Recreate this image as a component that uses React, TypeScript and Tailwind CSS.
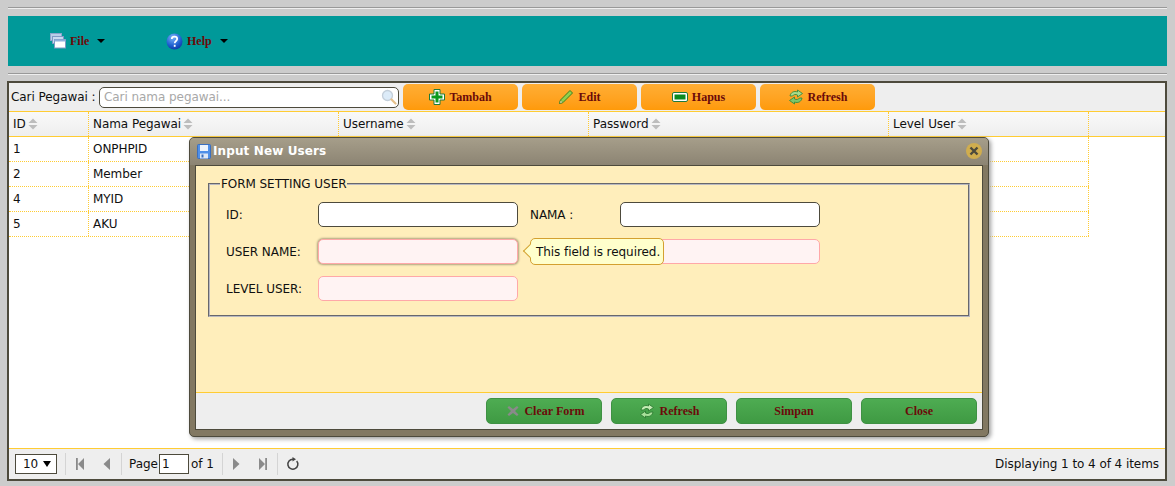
import React from "react";

const sans = "font-['Tahoma','DejaVu_Sans',sans-serif]";
const serif = "font-['Liberation_Serif',serif]";

function Sort() {
  return (
    <svg width="10" height="12" viewBox="0 0 10 12" className="ml-[2px] shrink-0">
      <path d="M5 0.5 9.5 5H0.5Z M0.5 7H9.5L5 11.5Z" fill="#bdbdbd" />
    </svg>
  );
}

function Plus() {
  return (
    <svg width="16" height="16" viewBox="0 0 16 16">
      <path d="M5 .5h6v4.500h4.500v6H11v4.500H5V11H.5V5H5Z" fill="#fff" stroke="#1f7a3a" strokeWidth="1" />
      <path d="M6.500 2.500h3v4h4v3h-4v4h-3v-4h-4v-3h4Z" fill="#0a9a1f" />
    </svg>
  );
}
function Pencil() {
  return (
    <svg width="16" height="16" viewBox="0 0 16 16">
      <path d="M12 1.500 14.500 4 5 13.500l-3.500 1 1-3.500Z" fill="#8fd14f" stroke="#3f7d1c" strokeWidth="1" />
      <path d="M1.500 14.500l1-3.500L5 13.500Z" fill="#f0e0b0" stroke="#3f7d1c" strokeWidth=".6" />
    </svg>
  );
}
function Minus() {
  return (
    <svg width="16" height="16" viewBox="0 0 16 16">
      <rect x="0.5" y="3.500" width="15" height="9" rx="1.500" fill="#fff" stroke="#1f7a3a" />
      <rect x="2.500" y="5.500" width="11" height="5" fill="#0a8a1f" />
    </svg>
  );
}
function Refresh({ pale }: { pale?: boolean }) {
  const a = pale ? "#c4ecb4" : "#a6dc8c";
  const b = pale ? "#a8e09a" : "#7cc76b";
  const s = pale ? "#2f7d33" : "#3d8a3a";
  return (
    <svg width="16" height="16" viewBox="0 0 16 16">
      <path d="M2 7C2.500 3.500 6 1.500 9.500 3V1L14.500 4.500 9.500 8V6C7.500 5 5.500 5.500 4.500 7Z" fill={a} stroke={s} strokeWidth=".9" strokeLinejoin="round" />
      <path d="M14 9C13.500 12.500 10 14.500 6.500 13V15L1.500 11.500 6.500 8V10C8.500 11 10.500 10.500 11.500 9Z" fill={b} stroke={s} strokeWidth=".9" strokeLinejoin="round" />
    </svg>
  );
}
function ClearX() {
  return (
    <svg width="12" height="12" viewBox="0 0 12 12">
      <path d="M2 1 6 4 10 1 11.500 2.500 8 6 11.500 9.500 10 11 6 8 2 11 .5 9.500 4 6 .5 2.500Z" fill="#8a8a8a" />
    </svg>
  );
}
function Floppy() {
  return (
    <svg width="14" height="15" viewBox="0 0 14 15">
      <rect x=".5" y=".5" width="13" height="14" rx="1" fill="#4f8fe8" stroke="#3a6fc0" />
      <rect x="3" y="1" width="8" height="6" fill="#eef4fc" />
      <rect x="3" y="9.500" width="8" height="5" fill="#dfe8f5" />
      <rect x="4.500" y="10.500" width="2" height="3" fill="#3a6fc0" />
    </svg>
  );
}
function Windows() {
  return (
    <svg width="16" height="16" viewBox="0 0 16 16">
      <rect x=".5" y=".5" width="11" height="7" fill="#b9cde8" stroke="#8aa5cc" />
      <rect x="2.500" y="3.500" width="11" height="7" fill="#c9daf0" stroke="#7e9ac4" />
      <rect x="4.500" y="6.500" width="11" height="8.500" fill="#fff" stroke="#7e9ac4" />
      <rect x="4.500" y="6.500" width="11" height="2" fill="#8fb0dc" />
    </svg>
  );
}
function HelpIcon() {
  return (
    <svg width="17" height="17" viewBox="0 0 17 17">
      <defs>
        <radialGradient id="h" cx=".4" cy=".25" r=".85">
          <stop offset="0" stopColor="#7ab4f8" />
          <stop offset=".6" stopColor="#1f5fd0" />
          <stop offset="1" stopColor="#0a2f9a" />
        </radialGradient>
      </defs>
      <circle cx="8.500" cy="8.500" r="8" fill="url(#h)" />
      <path d="M5.800 6C5.800 2.900 11.200 2.900 11.200 6 11.200 8 8.700 8 8.700 10.300" fill="none" stroke="#fff" strokeWidth="1.700" />
      <rect x="7.800" y="11.800" width="1.800" height="2" fill="#fff" />
    </svg>
  );
}
function Search() {
  return (
    <svg width="16" height="16" viewBox="0 0 16 16">
      <circle cx="6.500" cy="6.500" r="5" fill="#dcebf8" stroke="#c4cfda" strokeWidth="1.300" />
      <path d="M10.500 10.500 14.500 14.500" stroke="#e6c08a" strokeWidth="2.200" strokeLinecap="round" />
    </svg>
  );
}
function Caret() {
  return <span className="ml-[8px] inline-block h-0 w-0 border-x-[4px] border-t-[4px] border-x-transparent border-t-black" />;
}

function ToolBtn({ icon, label }: { icon: React.ReactNode; label: string }) {
  return (
    <div className={`flex h-[26px] w-[115px] items-center justify-center gap-[4px] rounded-[5px] bg-gradient-to-b from-[#ffae33] to-[#ff9a08] text-[12px] font-bold tracking-normal text-[#6b0a0a] ${serif}`}>
      {icon}
      <span>{label}</span>
    </div>
  );
}
function GreenBtn({ icon, label, extra }: { icon?: React.ReactNode; label: string; extra?: string }) {
  return (
    <div className={`flex h-[26px] w-[116px] items-center justify-center gap-[5px] rounded-[5px] border border-[#3f9144] bg-gradient-to-b from-[#4eac52] to-[#3f9a43] text-[12px] font-bold tracking-normal text-[#6b0a0a] ${serif} ${extra ?? ""}`}>
      {icon}
      <span>{label}</span>
    </div>
  );
}

const columns = [
  { label: "ID", w: "w-[80px]" },
  { label: "Nama Pegawai", w: "w-[250px]" },
  { label: "Username", w: "w-[250px]" },
  { label: "Password", w: "w-[300px]" },
  { label: "Level User", w: "w-[200px]" },
];
const rows = [
  ["1", "ONPHPID"],
  ["2", "Member"],
  ["4", "MYID"],
  ["5", "AKU"],
];

function Field({ tone }: { tone: "white" | "pink" | "focus" }) {
  const cls =
    tone === "white"
      ? "border-[#4d4a3c] bg-white"
      : tone === "pink"
        ? "border-[#ffa8a8] bg-[#fff3f3]"
        : "border-[#ffa8a8] bg-[#fff3f3] shadow-[0_0_2px_1px_#b0a580]";
  return <div className={`h-[25px] w-[200px] rounded-[5px] border ${cls}`} />;
}

function PagerIcon({ d }: { d: string }) {
  return (
    <svg width="10" height="12" viewBox="0 0 10 12">
      <path d={d} fill="#8a8a8a" />
    </svg>
  );
}
const Sep = () => <div className="h-[22px] w-px bg-[#d4d4d4]" />;

export default function App() {
  return (
    <div className={`flex h-[486px] w-[1175px] flex-col overflow-hidden bg-[#cccccc] pl-[7px] pr-[8px] pt-[7px] text-[12px] tracking-[-0.06px] text-[#101010] ${sans}`}>
      <div className="ml-px h-[2px] border-t border-[#999999] bg-[#eeeeee]" />
      <div className="ml-px mt-[7px] flex h-[50px] items-center bg-[#009999] pl-[42px] text-[12px] font-bold tracking-normal text-[#6b0a0a]">
        <div className={`flex w-[116px] items-center ${serif}`}>
          <Windows />
          <span className="ml-[4px]">File</span>
          <Caret />
        </div>
        <div className={`flex items-center ${serif}`}>
          <HelpIcon />
          <span className="ml-[4px]">Help</span>
          <Caret />
        </div>
      </div>
      <div className="ml-px mt-[7px] h-[2px] border-t border-[#999999] bg-[#eeeeee]" />

      <div className="relative mt-[6px] flex h-[400px] flex-col border-2 border-[#4d4a3c] bg-white">
        <div className="flex h-[28px] items-center bg-[#eeeeee] pl-[2px]">
          <span className="w-[88px] whitespace-nowrap">Cari Pegawai :</span>
          <div className="flex h-[21px] w-[300px] items-center justify-between rounded-[5px] border border-[#4d4a3c] bg-white pl-[4px] pr-[1px] text-[#a8a8a8]">
            <span>Cari nama pegawai...</span>
            <Search />
          </div>
          <div className="ml-[4px] flex gap-[4px]">
            <ToolBtn icon={<Plus />} label="Tambah" />
            <ToolBtn icon={<Pencil />} label="Edit" />
            <ToolBtn icon={<Minus />} label="Hapus" />
            <ToolBtn icon={<Refresh />} label="Refresh" />
          </div>
        </div>

        <div className="flex h-[26px] border-y border-[#ffcc33] bg-gradient-to-b from-[#f9f9f9] to-[#eeeeee]">
          {columns.map((c) => (
            <div key={c.label} className={`flex ${c.w} items-center border-r border-dotted border-[#ffcc33] pl-[4px]`}>
              <span>{c.label}</span>
              <Sort />
            </div>
          ))}
        </div>

        <div className="flex-1">
          {rows.map((r) => (
            <div key={r[0]} className="flex h-[25px] w-[1080px] border-b border-dotted border-[#ffcc33]">
              {columns.map((c, i) => (
                <div key={c.label} className={`flex ${c.w} items-center border-r border-dotted border-[#ffcc33] pb-[1px] pl-[4px]`}>
                  {i < 2 ? r[i] : ""}
                </div>
              ))}
            </div>
          ))}
        </div>

        <div className="flex h-[31px] items-center border-t border-[#ffcc33] bg-[#eeeeee] pl-[6px] pr-[6px]">
          <div className="flex h-[20px] w-[42px] items-center justify-between border border-[#4d4a3c] bg-white pl-[7px] pr-[5px]">
            <span>10</span>
            <span className="h-0 w-0 border-x-[4px] border-t-[6px] border-x-transparent border-t-black" />
          </div>
          <div className="ml-[8px]"><Sep /></div>
          <div className="ml-[9px] flex w-[46px] items-center gap-[17px]">
            <PagerIcon d="M1 0H2.800V12H1Z M9 0V12L3 6Z" />
            <PagerIcon d="M8 0V12L1.500 6Z" />
          </div>
          <Sep />
          <span className="ml-[7px] w-[27px]">Page</span>
          <div className="ml-[3px] flex h-[20px] w-[30px] items-center border border-[#4d4a3c] bg-white pl-[2px]">1</div>
          <span className="ml-[2px] w-[31px]">of 1</span>
          <Sep />
          <div className="ml-[8px] flex w-[46px] items-center gap-[17px]">
            <PagerIcon d="M2 0V12L8.500 6Z" />
            <PagerIcon d="M1 0V12L7 6Z M7.200 0H9V12H7.200Z" />
          </div>
          <Sep />
          <svg width="14" height="14" viewBox="0 0 14 14" className="ml-[8px]">
            <path d="M10.700 4A5 5 0 1 1 7 2.200" fill="none" stroke="#444" strokeWidth="1.500" />
            <path d="M6.500 0 10 2.300 6.500 4.600Z" fill="#444" />
          </svg>
          <span className="ml-auto whitespace-nowrap">Displaying 1 to 4 of 4 items</span>
        </div>

        <div className="absolute left-[180px] top-[54px] flex h-[300px] w-[800px] flex-col rounded-[5px] border border-[#4d4a3c] bg-[#827862] px-[5px] pb-[6px] shadow-[2px_2px_4px_#a0a0a0]">
          <div className="-mx-[5px] flex h-[27px] items-center justify-between rounded-t-[4px] bg-gradient-to-b from-[#a69e8a] to-[#8c8473] pb-[1px] pl-[7px] pr-[6px]">
            <div className="flex items-center gap-[2px] text-[12px] font-bold tracking-[0.12px] text-white">
              <Floppy />
              <span>Input New Users</span>
            </div>
            <div className="flex h-[16px] w-[16px] items-center justify-center rounded-full bg-[#d0ad4e]">
              <svg width="10" height="10" viewBox="0 0 10 10">
                <path d="M1.500 1.500 8.500 8.500M8.500 1.500 1.500 8.500" stroke="#4d4a3c" strokeWidth="2.400" />
              </svg>
            </div>
          </div>
          <div className="flex flex-1 flex-col border border-[#4d4a3c] bg-[#ffeebb]">
            <div className="flex-1 px-[12px] pt-[11px]">
              <fieldset className="relative h-[140px] border-2 border-[#b8b8c0] [border-style:groove] pl-[16px]">
                <legend className="-ml-[6px] px-[1px] leading-[14px]">FORM SETTING USER</legend>
                <div className="mt-[11px] grid grid-cols-[92px_200px_12px_90px_200px] items-center gap-y-[12px]">
                  <span>ID:</span>
                  <Field tone="white" />
                  <span />
                  <span>NAMA :</span>
                  <Field tone="white" />
                  <span>USER NAME:</span>
                  <Field tone="focus" />
                  <span />
                  <span />
                  <Field tone="pink" />
                  <span>LEVEL USER:</span>
                  <Field tone="pink" />
                </div>
                <div className="absolute left-[320px] top-[47px] flex h-[27px] w-[134px] items-center whitespace-nowrap rounded-[5px] border border-[#d4a030] bg-[#ffffcc] pl-[5px]">
                  This field is required.
                  <span className="absolute -left-[6px] top-[7px] h-[10px] w-[10px] rotate-45 border-b border-l border-[#d4a030] bg-[#ffffcc]" />
                </div>
              </fieldset>
            </div>
            <div className="flex h-[37px] items-center justify-end gap-[9px] border-t border-[#ffcc33] bg-[#eeeeee] pr-[5px]">
              <GreenBtn icon={<ClearX />} label="Clear Form" extra="pl-[4px]" />
              <GreenBtn icon={<Refresh pale />} label="Refresh" />
              <GreenBtn label="Simpan" />
              <GreenBtn label="Close" />
            </div>
          </div>
        </div>
      </div>
    </div>
  );
}
